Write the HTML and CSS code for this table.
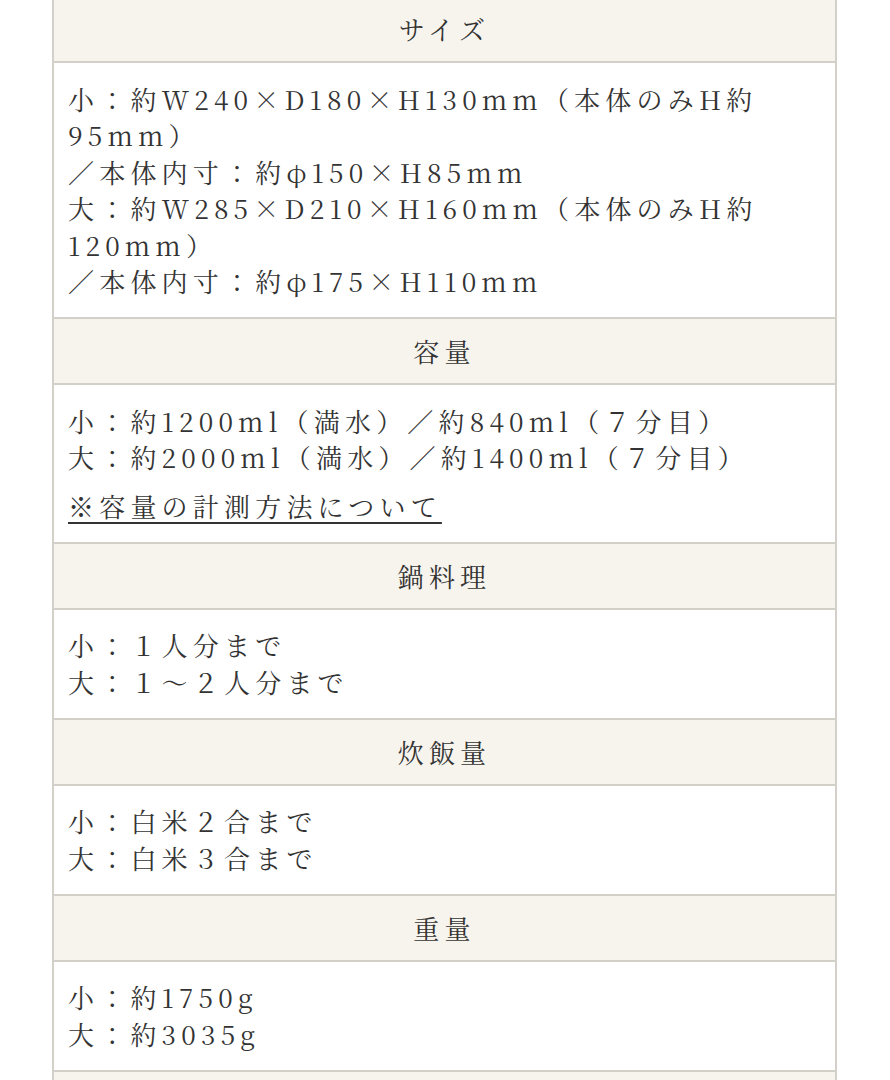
FILE: index.html
```html
<!DOCTYPE html>
<html lang="ja">
<head>
<meta charset="utf-8">
<title>仕様</title>
<link rel="stylesheet" href="styles.css">
</head>
<body>
<dl class="spec">
  <dt class="spec-head">サイズ</dt>
  <dd class="spec-body">小：約W240×D180×H130mm（本体のみH約95mm）<br>／本体内寸：約φ150×H85mm<br>大：約W285×D210×H160mm（本体のみH約120mm）<br>／本体内寸：約φ175×H110mm</dd>
  <dt class="spec-head">容量</dt>
  <dd class="spec-body">小：約1200ml（満水）／約840ml（７分目）<br>大：約2000ml（満水）／約1400ml（７分目）
    <a class="spec-link" href="#">※容量の計測方法について</a></dd>
  <dt class="spec-head">鍋料理</dt>
  <dd class="spec-body">小：１人分まで<br>大：１～２人分まで</dd>
  <dt class="spec-head">炊飯量</dt>
  <dd class="spec-body">小：白米２合まで<br>大：白米３合まで</dd>
  <dt class="spec-head">重量</dt>
  <dd class="spec-body">小：約1750g<br>大：約3035g</dd>
  <dt class="spec-head">素材</dt>
  <dd class="spec-body">陶器</dd>
</dl>
</body>
</html>
```
FILE: styles.css
```css
html, body {
  margin: 0;
  padding: 0;
  background: #ffffff;
}
body {
  overflow: hidden;
  height: 1080px;
}
.spec {
  margin: -5px 0 0 52px;
  width: 785px;
  box-sizing: border-box;
  border-left: 2px solid #d3d0ca;
  border-right: 2px solid #d3d0ca;
  font-family: "Noto Serif CJK JP", "Liberation Serif", "Noto Sans CJK JP", serif;
  font-size: 26px;
  line-height: 36.5px;
  letter-spacing: 0.2em;
  color: #333333;
}
.spec-head {
  margin: 0;
  padding: 14px 0 13.5px;
  background: #f7f4ed;
  border-top: 2px solid #d3d0ca;
  text-align: center;
}
.spec-body {
  margin: 0;
  padding: 17.5px 14px 17.5px;
  background: #ffffff;
  border-top: 2px solid #d3d0ca;
  text-align: left;
}
.spec-link {
  display: block;
  margin-top: 12px;
  color: #333333;
  text-decoration: underline;
  text-decoration-thickness: 2px;
  text-underline-offset: 5px;
  width: fit-content;
}
```
